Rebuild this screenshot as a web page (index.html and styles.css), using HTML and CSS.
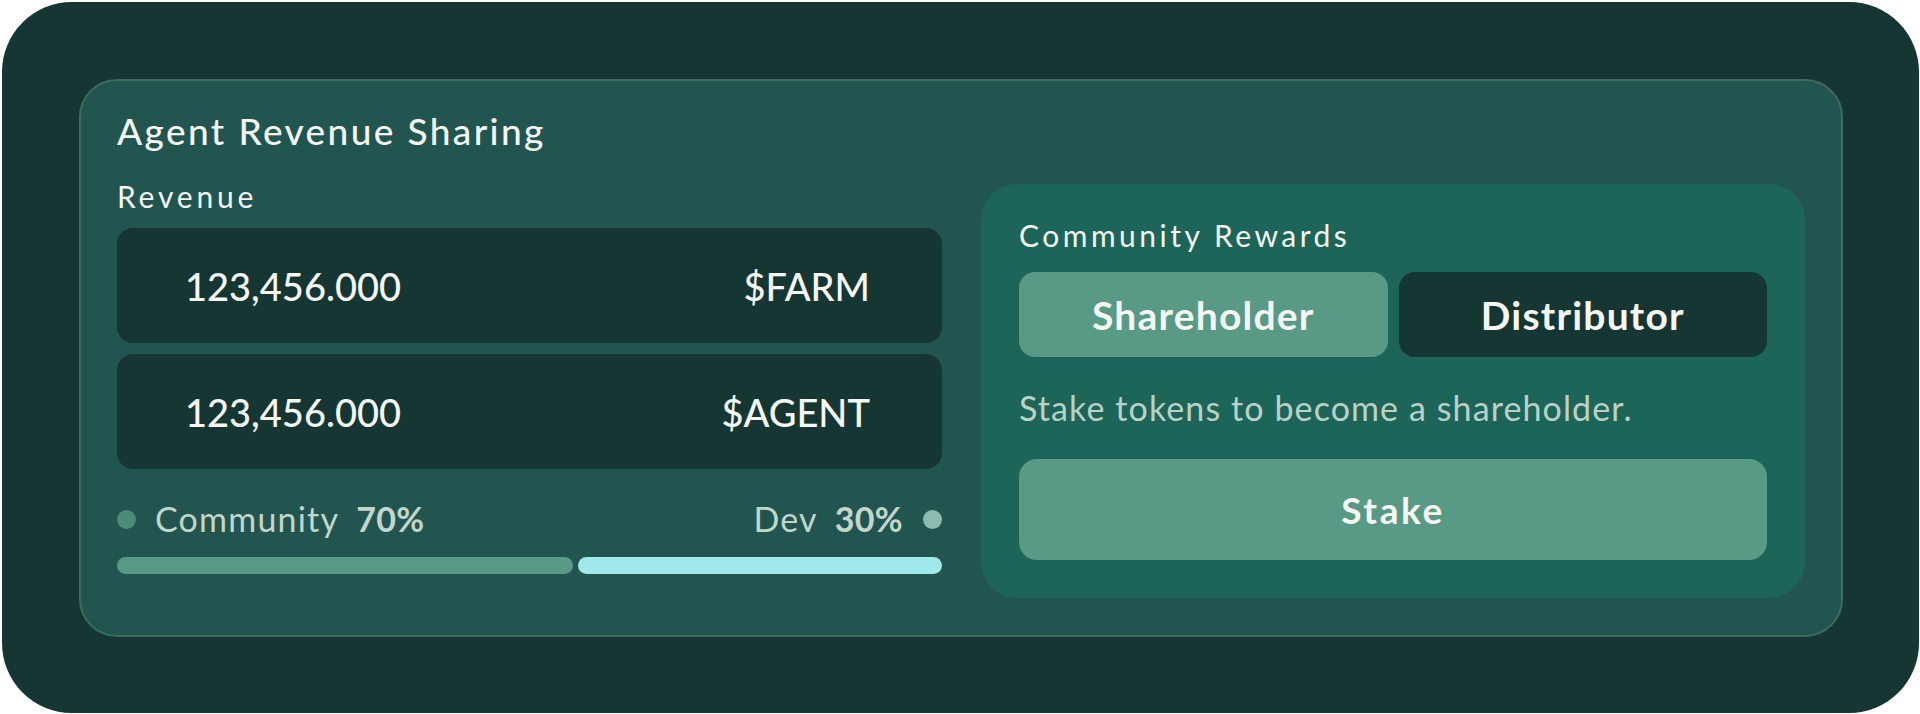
FILE: index.html
```html
<!DOCTYPE html>
<html lang="en">
<head>
    <meta charset="UTF-8">
    <meta name="viewport" content="width=device-width, initial-scale=1.0">
    <link rel="stylesheet" href="styles.css">
    <title>Agent Revenue Sharing</title>
</head>
<body>
    <div class="frame">
        <div class="card">
            <h1 class="card-title">Agent Revenue Sharing</h1>
            <div class="content">
                <div class="revenue">
                    <p class="label">Revenue</p>
                    <div class="amount">
                        <span>123,456.000</span>
                        <span>$FARM</span>
                    </div>
                    <div class="amount">
                        <span>123,456.000</span>
                        <span>$AGENT</span>
                    </div>

                    <div class="legend">
                        <div class="legend-item">
                            <span class="dot community-dot"></span>
                            <span class="legend-name">Community</span>
                            <b>70%</b>
                        </div>
                        <div class="legend-item">
                            <span class="legend-name">Dev</span>
                            <b>30%</b>
                            <span class="dot dev-dot"></span>
                        </div>
                    </div>
                    <div class="split-bar">
                        <div class="bar community-bar"></div>
                        <div class="bar dev-bar"></div>
                    </div>
                </div>

                <div class="rewards">
                    <p class="rewards-title">Community Rewards</p>
                    <div class="tabs">
                        <button class="tab active">Shareholder</button>
                        <button class="tab">Distributor</button>
                    </div>
                    <p class="hint">Stake tokens to become a shareholder.</p>
                    <button class="stake-btn">Stake</button>
                </div>
            </div>
        </div>
    </div>
</body>
</html>
```

FILE: styles.css
```css
:root {
    --dark: #163633;
    --card: #235550;
    --card-border: #3d6b5c;
    --panel: #1e6559;
    --accent: #589a86;
    --cyan: #a0e9eb;
    --text: #f4f7f2;
    --muted: #c2d6cc;
}

* {
    padding: 0;
    margin: 0;
    box-sizing: border-box;
}

body {
    background: #fff;
    font-family: Lato, 'Open Sans', sans-serif;
    color: var(--text);
}

.frame {
    margin: 2px 1px 1px 2px;
    height: 711px;
    background: var(--dark);
    border-radius: 70px;
    padding: 77px 76px 76px 77px;
}

.card {
    height: 100%;
    background: var(--card);
    border: 2px solid var(--card-border);
    border-radius: 38px;
    padding: 28px 36px 0;
}

.card-title {
    font-size: 37px;
    font-weight: 500;
    line-height: 1.2;
    letter-spacing: 2.4px;
    margin-bottom: 26px;
}

.content {
    display: flex;
    gap: 39px;
    align-items: flex-start;
}

/* left column */
.revenue {
    width: 825px;
}

.label {
    font-size: 30px;
    line-height: 1.16;
    letter-spacing: 3.8px;
    margin-bottom: 14px;
}

.amount {
    height: 115px;
    background: var(--dark);
    border-radius: 16px;
    padding: 0 72px 0 68px;
    display: flex;
    align-items: center;
    justify-content: space-between;
    font-size: 38px;
    font-weight: 500;
}

.amount + .amount {
    margin-top: 11px;
}

.legend {
    display: flex;
    justify-content: space-between;
    margin-top: 30px;
    font-size: 34px;
    line-height: 1.2;
    color: var(--muted);
}

.legend-item {
    display: flex;
    align-items: center;
    gap: 17px;
}

.legend-name {
    letter-spacing: 1.2px;
}

.legend-item b {
    font-weight: 700;
    letter-spacing: 0.3px;
}

.dot {
    width: 19px;
    height: 19px;
    border-radius: 50%;
}

.community-dot {
    background: #4e8a77;
    margin-right: 2px;
}

.dev-dot {
    background: #8fbab0;
    margin-left: 3px;
}

.split-bar {
    display: flex;
    gap: 5px;
    margin-top: 17px;
}

.bar {
    height: 17px;
    border-radius: 9px;
}

.community-bar {
    flex: 456;
    background: var(--accent);
}

.dev-bar {
    flex: 364;
    background: var(--cyan);
}

/* right panel */
.rewards {
    width: 824px;
    margin-top: 5px;
    background: var(--panel);
    border-radius: 36px;
    padding: 33px 38px 38px;
}

.rewards-title {
    font-size: 30px;
    line-height: 1.2;
    letter-spacing: 3.5px;
    margin-bottom: 19px;
}

.tabs {
    display: flex;
    gap: 11px;
}

.tab {
    flex: 1;
    height: 85px;
    border: none;
    border-radius: 16px;
    background: var(--dark);
    color: var(--text);
    font-family: inherit;
    font-size: 39px;
    font-weight: 700;
    letter-spacing: 1.2px;
}

.tab.active {
    background: var(--accent);
}

.hint {
    margin-top: 31px;
    font-size: 34px;
    line-height: 1.2;
    letter-spacing: 1.1px;
    color: #b9d2c7;
}

.stake-btn {
    display: block;
    width: 100%;
    height: 101px;
    margin-top: 30px;
    border: none;
    border-radius: 18px;
    background: var(--accent);
    color: var(--text);
    font-family: inherit;
    font-size: 37px;
    font-weight: 700;
    letter-spacing: 2.6px;
}
```
